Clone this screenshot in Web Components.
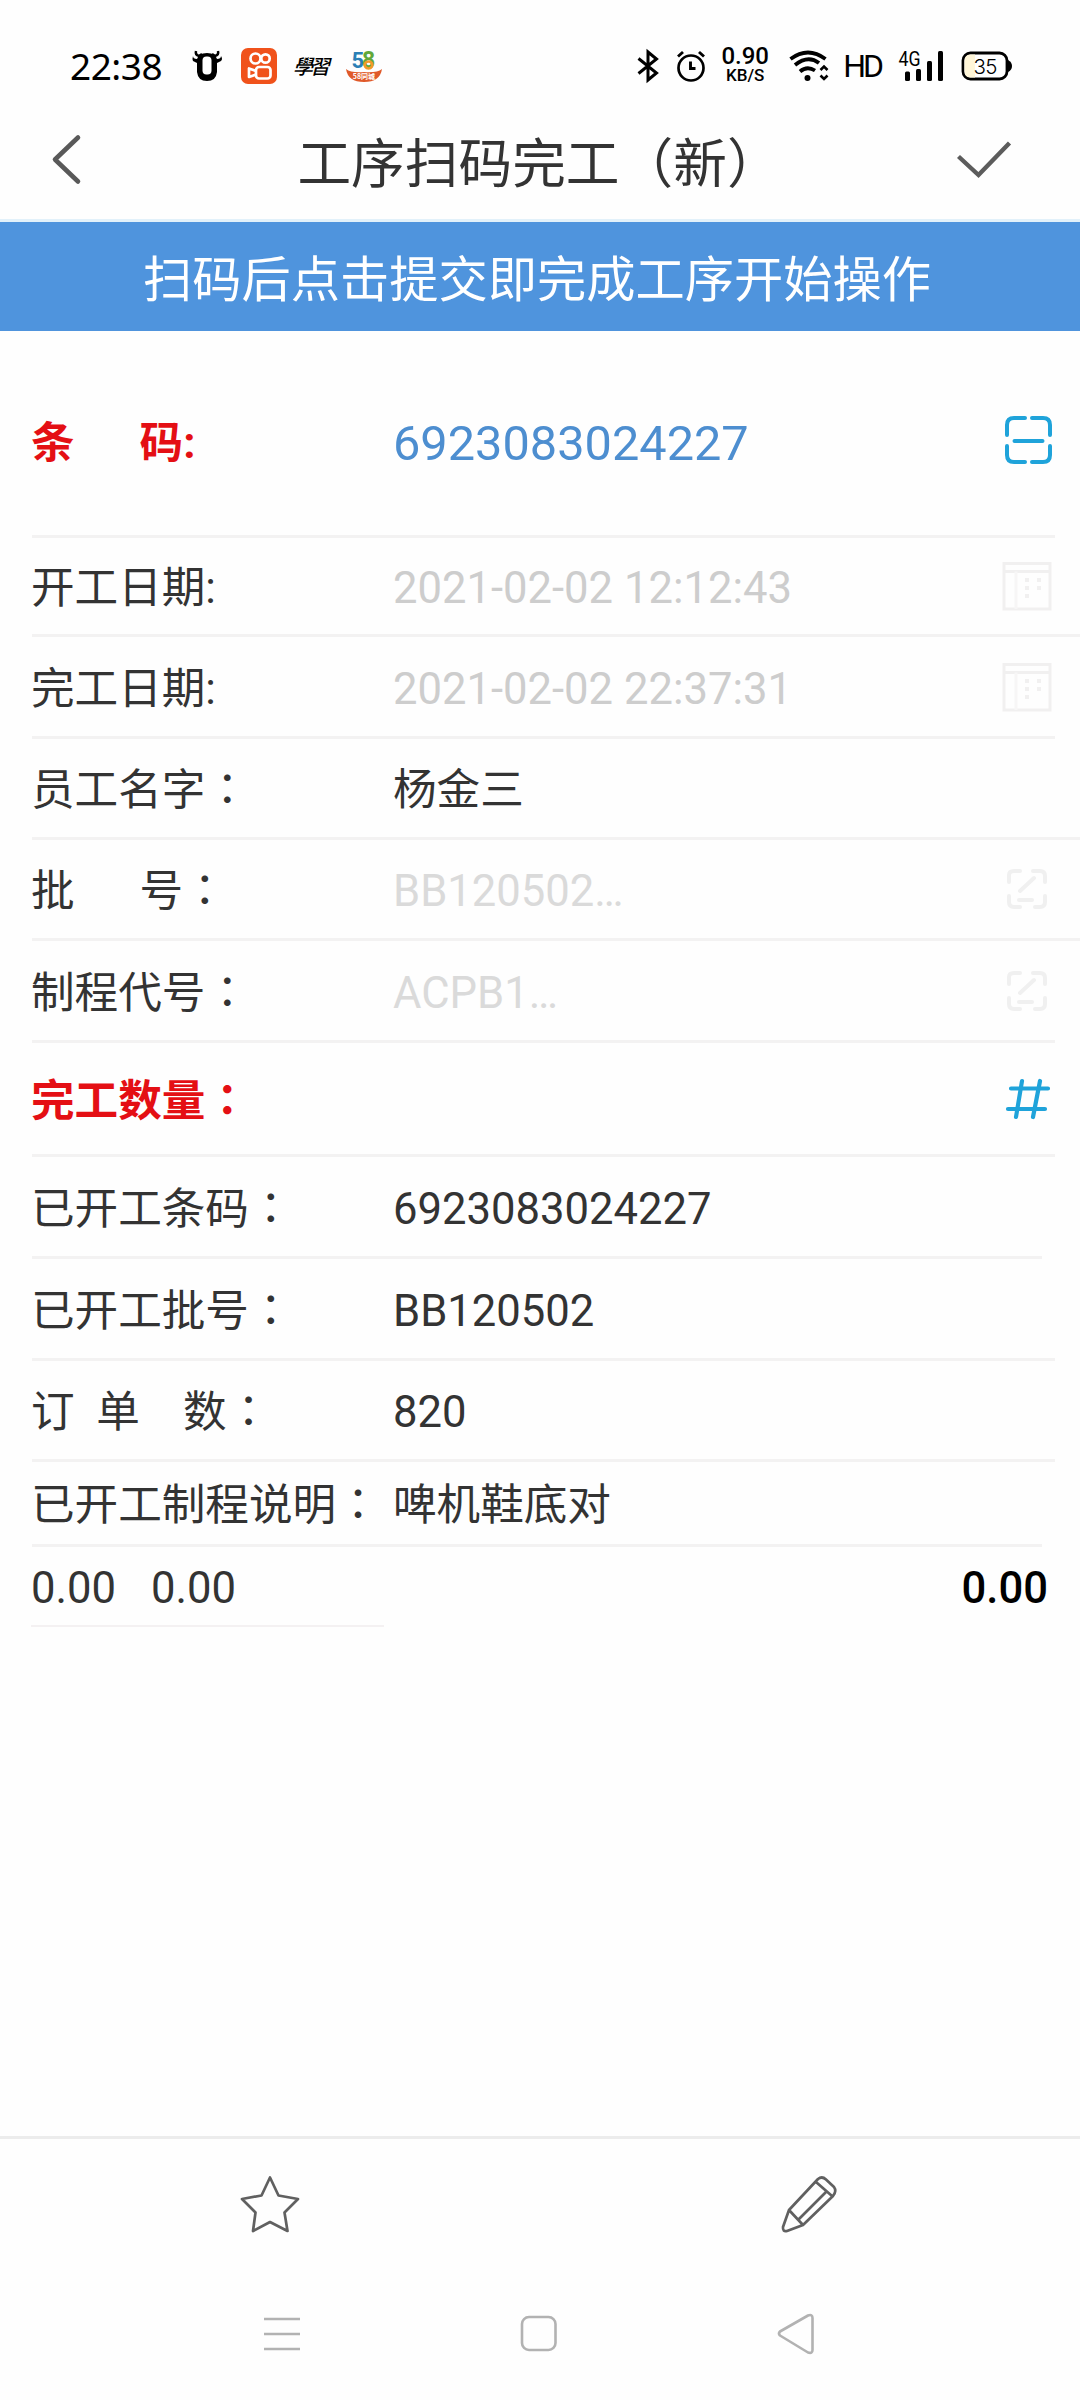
<!DOCTYPE html>
<html lang="zh-CN">
<head>
<meta charset="utf-8">
<title>工序扫码完工（新）</title>
<style>
  body {
    margin: 0;
    background: #fefefe;
    color: #333;
    font-family: Roboto, "Noto Sans CJK SC", sans-serif;
  }
</style>
</head>
<body>
<work-page></work-page>
<script>
const ICONS = {
  back: { w: 32, h: 52, body: '<path d="M28 4.500 5 26.500 28 48.500" fill="none" stroke="#595959" stroke-width="4.600" stroke-linecap="round" stroke-linejoin="round"/>' },
  check: { w: 56, h: 40, body: '<path d="M2.500 16.500 22.500 35 53.500 3" fill="none" stroke="#5c5c5c" stroke-width="4.400"/>' },
  scan: { w: 48, h: 50, body: '<g fill="none" stroke="#1fa3da" stroke-width="4" stroke-linecap="round"><path d="M3 20V10Q3 3 10 3H21M28 3H39Q46 3 46 10V20M46 31V40Q46 47 39 47H28M21 47H10Q3 47 3 40V31M10.500 26H38.500"/></g>' },
  calendar: { w: 50, h: 50, body: '<g fill="none" stroke="#f1f0f0" stroke-width="3"><path d="M2 2.500H48V48H2ZM2 10.500H48"/><path d="M14 10.500V48" stroke="#f7f6f6"/><path d="M25 17V40M37 17V32" stroke-dasharray="4 4" stroke-width="4"/></g>' },
  link: { w: 40, h: 42, body: '<g fill="none" stroke="#f0f0f0" stroke-width="4" stroke-linecap="round"><path d="M2 14V7Q2 3 7 3H13M26 3H33Q38 3 38 8V14M38 28V34Q38 39 33 39H28M13 39H7Q2 39 2 34V28M13 23 27 10M12 32H25"/></g>' },
  hash: { w: 44, h: 40, body: '<g fill="none" stroke="#1fa3da" stroke-width="4.200" stroke-linecap="round"><path d="M5 9.500H42M2 30H39M16 2 10 38M34 2 27 38"/></g>' },
  star: { w: 60, h: 58, body: '<path d="M30 2.500 38.500 20.500 58 24 44.500 37.500 47.500 56 30 47 13 56 15.500 37.500 2 24 21.500 20.500Z" fill="none" stroke="#606060" stroke-width="2.700" stroke-linejoin="round"/>' },
  pencil: { w: 58, h: 58, body: '<g fill="none" stroke="#606060" stroke-width="2.700" stroke-linejoin="round" stroke-linecap="round"><path d="M9 35 38 4Q42 .800 46 4.500L54 12Q57 16 53 21L23 50 7 56Q2.500 57 3 52ZM9 35 23 50M36 7 52 21M46 17 19 44"/></g>' },
  menu: { w: 38, h: 36, body: '<path d="M1 3H37M1 18H37M1 33H37" stroke="#b2b2b2" stroke-width="2.600"/>' },
  home: { w: 38, h: 38, body: '<rect x="2" y="2" width="33.500" height="33" rx="7" fill="none" stroke="#b2b2b2" stroke-width="2.600"/>' },
  prev: { w: 38, h: 42, body: '<path d="M3 18.500Q1 20.500 3 22.500L31 39.500Q35.500 41 35.500 37V5Q35.500 .800 31 2.500Z" fill="none" stroke="#b2b2b2" stroke-width="2.600" stroke-linejoin="round"/>' },
  ox: { w: 30, h: 32, body: '<path d="M5 9Q1 9 1 6Q0 9 1 11L5 13V22Q6 31 15 31Q24 31 25 22V13L29 11Q31 9 29 6Q29 9 25 9L23 5Q15 1 7 5Z" fill="#000"/><path d="M4 1Q3 5 7 6L10 4M26 1Q27 5 23 6L20 4" stroke="#000" stroke-width="2.500" fill="none"/><rect x="10.500" y="6.500" width="9" height="18" rx="4" fill="#fff"/>' },
  camera: { w: 36, h: 36, body: '<rect width="36" height="36" rx="7" fill="#f0521b"/><g fill="none" stroke="#fff" stroke-width="2.700"><circle cx="14.500" cy="10.500" r="5"/><circle cx="24.500" cy="10.500" r="4.200"/><rect x="15" y="19" width="14.500" height="11.500" rx="3"/><path d="M15 23 8 20.500V29L15 26.500" stroke-linejoin="round"/></g>' },
  bluetooth: { w: 24, h: 32, body: '<path d="M2.500 8.500 20.500 23 12 30V2L20.500 9 2.500 23.500" fill="none" stroke="#000" stroke-width="3"/>' },
  alarm: { w: 30, h: 32, body: '<circle cx="15" cy="18" r="12.500" fill="none" stroke="#000" stroke-width="2.700"/><path d="M14.500 11.500V18.500H19.500M2 6.500 7 2M28 6.500 23 2" fill="none" stroke="#000" stroke-width="2.900"/>' },
  wifi: { w: 40, h: 32, body: '<g fill="none" stroke="#000"><path d="M1.500 9Q19 -4 36.500 9" stroke-width="3.800"/><path d="M6 15Q19 4.500 30 13" stroke-width="3.800"/><path d="M11 21.500Q18 15.500 26 20.500" stroke-width="3.800"/><path d="M31.500 20 35 16.500 38.500 20M31.500 25.500 35 29 38.500 25.500" stroke-width="2.600"/></g><circle cx="18.500" cy="28" r="3" fill="#000"/>' },
  signal: { w: 46, h: 34, body: '<g fill="#000"><rect x="7" y="22.500" width="5" height="9.500" rx="1.500"/><rect x="18" y="20" width="5" height="12" rx="1.500"/><rect x="29" y="12" width="5" height="20" rx="1.500"/><rect x="40" y="2" width="5" height="30" rx="1.500"/></g><text x="0.500" y="16.500" font-family="Roboto" font-size="20" textLength="22" lengthAdjust="spacingAndGlyphs">4G</text>' },
  battery: { w: 52, h: 30, body: '<rect x="2" y="2" width="44" height="26" rx="7.500" fill="#fff" stroke="#000" stroke-width="2.800"/><path d="M9 3.500H14V26.500H9Q3.500 26 3.500 20V10Q3.500 4 9 3.500Z" fill="#fff6d8"/><path d="M47 9Q51 11 51 15Q51 19 47 21Z" fill="#000"/><text x="24.500" y="22.500" text-anchor="middle" font-family="Inter, Roboto" font-size="20.500" font-weight="300" textLength="24">35</text>' },
  city58: { w: 38, h: 34, body: '<text x="6.500" y="19" font-family="Roboto" font-weight="700" font-size="22" fill="#2b7fb5">5</text><text x="17" y="19" font-family="Roboto" font-weight="700" font-size="23" fill="#62a83a">8</text><path d="M23.500 12.500a3.800 3.500 0 1 0 .1 0Z" fill="none" stroke="#f29a2a" stroke-width="2.600"/><path d="M1 20Q6 24 19 23Q32 24 37 20Q35 33 19 33Q3 33 1 20Z" fill="#e05a2a"/><text x="19" y="30" text-anchor="middle" font-family="Noto Sans CJK SC" font-size="7" font-weight="700" fill="#fff">58同城</text>' }
};

class AppIcon extends HTMLElement {
  constructor() {
    super();
    this.attachShadow({ mode: 'open' });
  }

  connectedCallback() {
    const icon = ICONS[this.getAttribute('name')];
    this.shadowRoot.innerHTML = `
      <style>
        :host { display: block; flex: none; }
        svg { display: block; overflow: visible; }
      </style>
      <svg width="${icon.w}" height="${icon.h}" viewBox="0 0 ${icon.w} ${icon.h}">${icon.body}</svg>
    `;
  }
}

class StatusBar extends HTMLElement {
  constructor() {
    super();
    this.attachShadow({ mode: 'open' });
  }

  connectedCallback() {
    this.shadowRoot.innerHTML = `
      <style>
        :host {
          display: flex;
          justify-content: space-between;
          align-items: center;
          box-sizing: border-box;
          height: 108px;
          padding: 24px 67px 0 70px;
          color: #000;
        }
        .group { display: flex; align-items: center; }
        .time { width: 122px; font: 37px/40px "Noto Sans", sans-serif; letter-spacing: -.5px; }
        .study {
          width: 36px;
          margin: 0 16px;
          font: italic 500 20px/34px "Noto Sans CJK TC", sans-serif;
          letter-spacing: -3px;
        }
        .speed {
          width: 50px;
          margin: 0 19px 0 14px;
          text-align: center;
        }
        .speed b { display: block; font: 500 24px/19px Roboto, sans-serif; }
        .speed span { display: block; font: 500 17px/19px Roboto, sans-serif; }
        .hd { margin: 0 17px 0 14px; font: 32px/34px Roboto, sans-serif; letter-spacing: -3px; }
      </style>
      <div class="group">
        <span class="time">22:38</span>
        <app-icon name="ox"></app-icon>
        <app-icon name="camera" style="margin-left: 19px"></app-icon>
        <span class="study">學習</span>
        <app-icon name="city58"></app-icon>
      </div>
      <div class="group">
        <app-icon name="bluetooth"></app-icon>
        <app-icon name="alarm" style="margin-left: 16px"></app-icon>
        <div class="speed"><b>0.90</b><span>KB/S</span></div>
        <app-icon name="wifi"></app-icon>
        <span class="hd">HD</span>
        <app-icon name="signal"></app-icon>
        <app-icon name="battery" style="margin-left: 17px"></app-icon>
      </div>
    `;
  }
}

class TitleBar extends HTMLElement {
  constructor() {
    super();
    this.attachShadow({ mode: 'open' });
  }

  connectedCallback() {
    this.shadowRoot.innerHTML = `
      <style>
        :host {
          display: grid;
          grid-template-columns: 80px 1fr 80px;
          align-items: center;
          box-sizing: border-box;
          height: 114px;
          padding: 0 68px 10px 50px;
          border-bottom: 3px solid #e2f1fa;
        }
        h1 {
          margin: 12px 0 0 16px;
          font-size: 53.700px;
          line-height: 70px;
          font-weight: 400;
          text-align: center;
        }
        .check { justify-self: end; margin-top: 2px; }
      </style>
      <app-icon name="back"></app-icon>
      <h1><slot></slot></h1>
      <app-icon class="check" name="check"></app-icon>
    `;
  }
}

class TipBanner extends HTMLElement {
  constructor() {
    super();
    this.attachShadow({ mode: 'open' });
  }

  connectedCallback() {
    this.shadowRoot.innerHTML = `
      <style>
        :host {
          display: block;
          box-sizing: border-box;
          height: 109px;
          padding-right: 6px;
          background: #4f94dd;
          color: #fff;
          font-size: 49.250px;
          line-height: 117px;
          text-align: center;
        }
      </style>
      <slot></slot>
    `;
  }
}

// line="full" runs the divider to the screen edge, line="short" stops it early
class FormRow extends HTMLElement {
  constructor() {
    super();
    this.attachShadow({ mode: 'open' });
  }

  connectedCallback() {
    const label = this.getAttribute('label');
    const icon = this.getAttribute('icon');
    // the full-width colon is drawn centred in its cell
    const text = label.replace('：', '<i lang="zh-Hant">：</i>');
    this.shadowRoot.innerHTML = `
      <style>
        :host {
          display: grid;
          grid-template-columns: 361px 1fr auto;
          align-items: center;
          box-sizing: border-box;
          margin: 0 25px 0 32px;
          padding-top: 6px;
          border-bottom: 3px solid #f3f2f2;
          font-size: 43.600px;
          line-height: 60px;
        }
        :host([line="full"]) { margin-right: 0; padding-right: 25px; }
        :host([line="short"]) { margin-right: 38px; }
        :host([required]) label { color: #e40f14; font-weight: 700; }
        :host([disabled]) .value { color: #cdcdcd; }
        :host([faint]) .value { color: #dadada; }
        :host([scan]) { padding-top: 21px; }
        :host([scan]) .value { color: #4d8ed0; font-size: 48.700px; }
        :host([scan]) app-icon { margin-top: -8px; }
        label { white-space: pre; margin-left: -1px; }
        i { font-style: normal; font-family: "Noto Sans CJK TC", sans-serif; line-height: 0; }
        app-icon { margin: -6px 3px 0 0; }
        app-icon[name="link"] { margin-right: 8px; }
        app-icon[name="hash"] { margin-right: 5px; }
      </style>
      <label>${text}</label>
      <span class="value"><slot></slot></span>
      ${icon ? `<app-icon name="${icon}"></app-icon>` : ''}
    `;
  }
}

class TotalRow extends HTMLElement {
  constructor() {
    super();
    this.attachShadow({ mode: 'open' });
  }

  connectedCallback() {
    this.shadowRoot.innerHTML = `
      <style>
        :host {
          display: flex;
          justify-content: space-between;
          height: 80px;
          margin: 0 32px 0 31px;
          font-size: 43.600px;
          line-height: 84px;
        }
        .left {
          display: flex;
          gap: 35px;
          width: 353px;
          box-sizing: border-box;
          border-bottom: 2px solid #f4f1f2;
        }
        .sum { color: #000; font-weight: 500; }
      </style>
      <div class="left"><slot></slot></div>
      <div class="sum"><slot name="sum"></slot></div>
    `;
  }
}

class IconBar extends HTMLElement {
  constructor() {
    super();
    this.attachShadow({ mode: 'open' });
  }

  connectedCallback() {
    this.shadowRoot.innerHTML = `
      <style>
        :host { display: flex; justify-content: space-around; align-items: center; box-sizing: border-box; }
      </style>
      <slot></slot>
    `;
  }
}

class WorkPage extends HTMLElement {
  constructor() {
    super();
    this.attachShadow({ mode: 'open' });
  }

  connectedCallback() {
    this.shadowRoot.innerHTML = `
      <style>
        :host { display: flex; flex-direction: column; width: 1080px; height: 2400px; overflow: hidden; }
        main { flex: 1; }
        .tools { height: 133px; padding-right: 2px; border-top: 3px solid #ececec; }
        .nav { justify-content: space-between; height: 131px; padding: 0 265px 1px 263px; }
      </style>
      <status-bar></status-bar>
      <title-bar>工序扫码完工（新）</title-bar>
      <tip-banner>扫码后点击提交即完成工序开始操作</tip-banner>
      <main>
        <form-row style="height: 207px" label="条      码:" icon="scan" required scan>6923083024227</form-row>
        <form-row style="height: 99px" label="开工日期:" icon="calendar" line="full" disabled>2021-02-02 12:12:43</form-row>
        <form-row style="height: 102px" label="完工日期:" icon="calendar" disabled>2021-02-02 22:37:31</form-row>
        <form-row style="height: 101px" label="员工名字：" line="full">杨金三</form-row>
        <form-row style="height: 101px" label="批      号：" icon="link" line="full" faint>BB120502…</form-row>
        <form-row style="height: 102px" label="制程代号：" icon="link" faint>ACPB1…</form-row>
        <form-row style="height: 114px" label="完工数量：" icon="hash" required></form-row>
        <form-row style="height: 102px" label="已开工条码：" line="short">6923083024227</form-row>
        <form-row style="height: 102px" label="已开工批号：">BB120502</form-row>
        <form-row style="height: 101px" label="订  单    数：">820</form-row>
        <form-row style="height: 85px" label="已开工制程说明：" line="short">啤机鞋底对</form-row>
        <total-row><span>0.00</span><span>0.00</span><span slot="sum">0.00</span></total-row>
      </main>
      <icon-bar class="tools">
        <app-icon name="star"></app-icon>
        <app-icon name="pencil"></app-icon>
      </icon-bar>
      <icon-bar class="nav">
        <app-icon name="menu"></app-icon>
        <app-icon name="home"></app-icon>
        <app-icon name="prev"></app-icon>
      </icon-bar>
    `;
  }
}

customElements.define('app-icon', AppIcon);
customElements.define('status-bar', StatusBar);
customElements.define('title-bar', TitleBar);
customElements.define('tip-banner', TipBanner);
customElements.define('form-row', FormRow);
customElements.define('total-row', TotalRow);
customElements.define('icon-bar', IconBar);
customElements.define('work-page', WorkPage);
</script>
</body>
</html>
